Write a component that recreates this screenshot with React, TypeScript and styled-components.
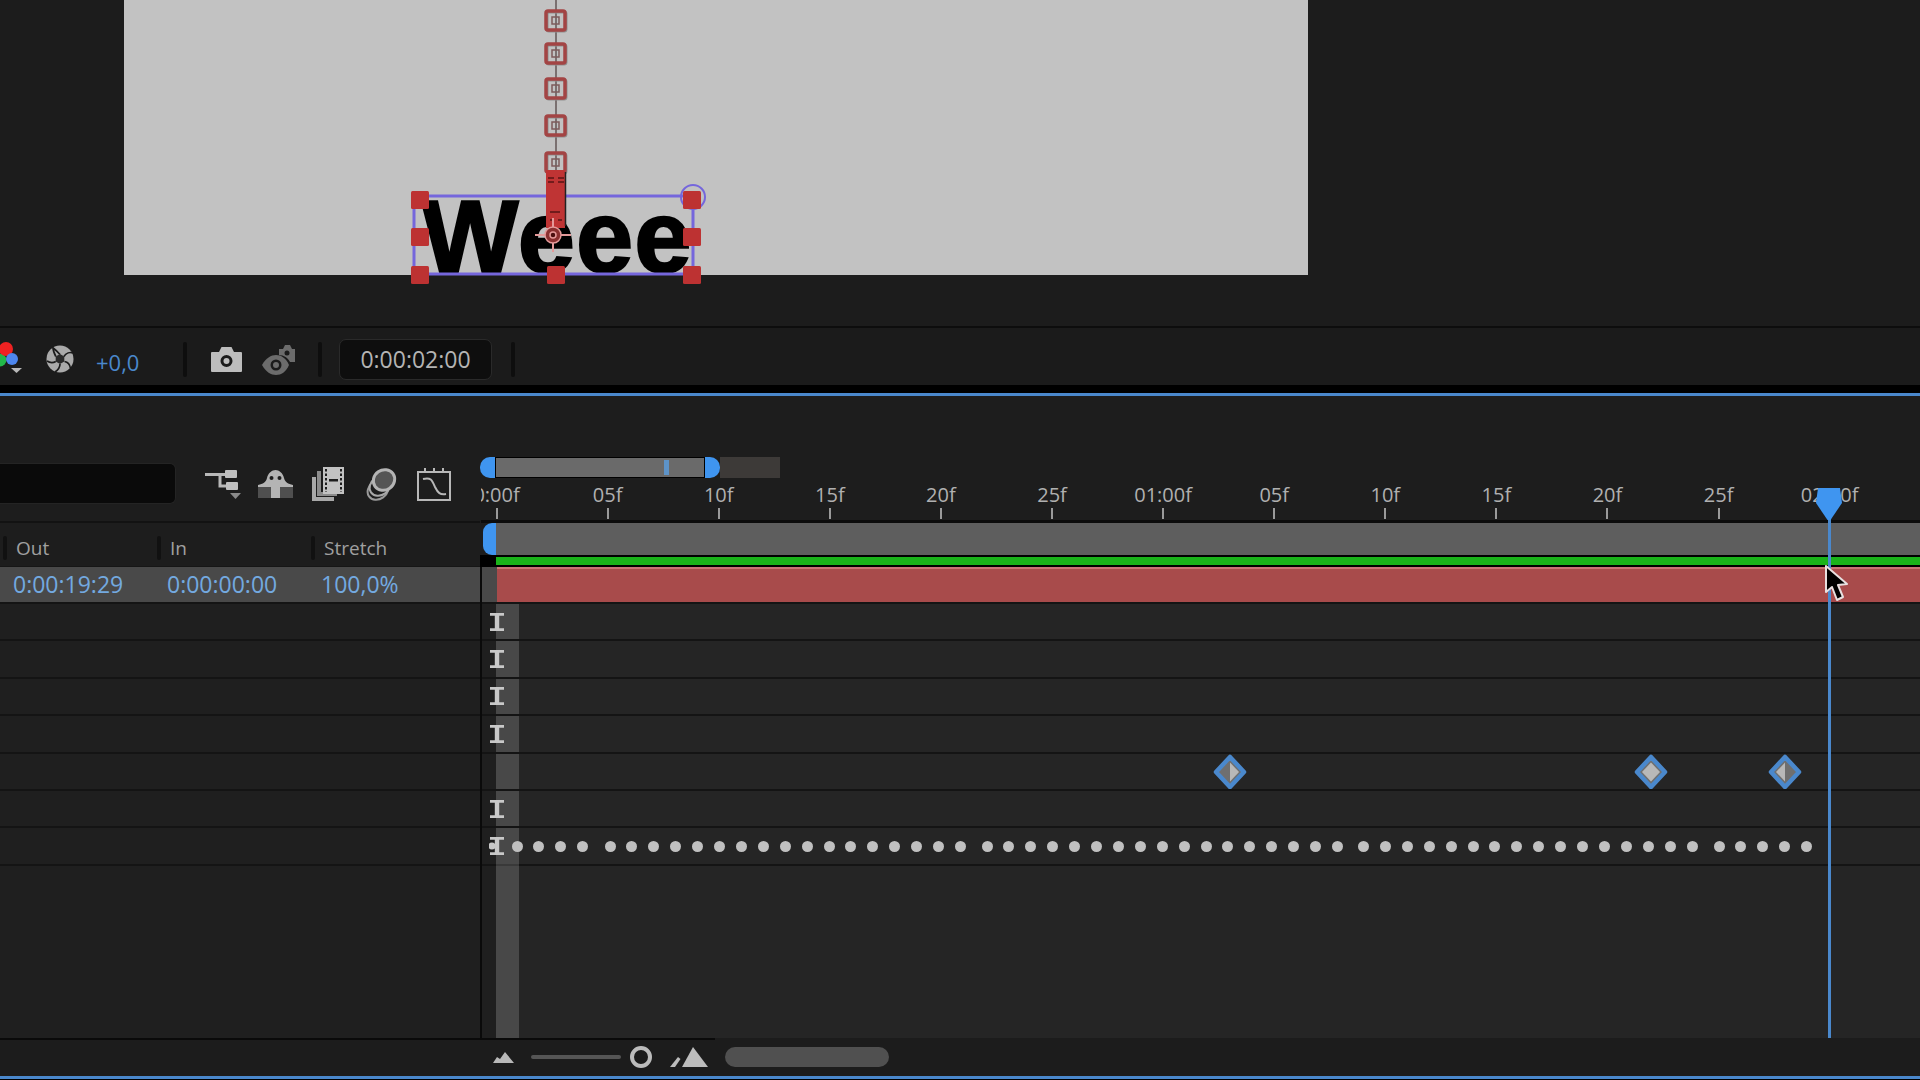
import React from "react";
import styled, { createGlobalStyle } from "styled-components";

const GlobalStyle = createGlobalStyle`
  html, body {
    margin: 0;
    background: #1c1c1c;
    overflow: hidden;
  }
  * {
    box-sizing: border-box;
  }
`;

const BLUE = "#4a88cc";

const Page = styled.div`
  width: 1920px;
  height: 1080px;
  display: flex;
  flex-direction: column;
  overflow: hidden;
  font-family: "Open Sans", "Liberation Sans", sans-serif;
  color: #a8a8a8;
`;

// Composition viewer
const Viewer = styled.div`
  height: 326px;
  flex: none;
  padding-left: 124px;
  background: #1c1c1c;
`;

const Canvas = styled.div`
  position: relative;
  width: 1184px;
  height: 275px;
  background: #c2c2c2;
`;

const CanvasText = styled.div`
  position: absolute;
  left: 298px;
  top: 186px;
  font-family: "Liberation Sans", Arial, sans-serif;
  font-weight: 700;
  font-size: 102px;
  letter-spacing: 1.5px;
  line-height: 1;
  color: #000;
  -webkit-text-stroke: 2.5px #000;
`;

const Overlay = styled.svg`
  position: absolute;
  left: 0;
  top: 0;
  overflow: visible;
`;

// Viewer toolbar
const Toolbar = styled.div`
  height: 67px;
  flex: none;
  display: flex;
  align-items: center;
  padding-top: 5px;
  background: #1b1b1b;
  border-top: 2px solid #0d0d0d;
  border-bottom: 8px solid #000;
`;

const BlueLine = styled.div`
  height: 3px;
  flex: none;
  background: ${BLUE};
`;

const EndLine = styled.div`
  height: 1px;
  flex: none;
  background: #000;
`;

const ToolIcon = styled.svg<{ $gap?: number }>`
  flex: none;
  margin-left: ${(p) => p.$gap ?? 0}px;
`;

const Exposure = styled.span`
  margin-left: 22px;
  width: 46px;
  font-size: 22px;
  line-height: 1;
  color: ${BLUE};
  padding-top: 6px;
  white-space: nowrap;
`;

const ToolSep = styled.div<{ $gap: number }>`
  flex: none;
  width: 4px;
  height: 35px;
  margin-left: ${(p) => p.$gap}px;
  background: #0e0e0e;
  border-radius: 2px;
`;

const Timecode = styled.div`
  margin-left: 17px;
  width: 153px;
  height: 41px;
  display: flex;
  align-items: center;
  justify-content: center;
  background: #0e0e0e;
  border: 1px solid #2a2a2a;
  border-radius: 7px;
  font-size: 23px;
  color: #b4b4b4;
`;

// Timeline panel
const Timeline = styled.div`
  flex: 1;
  display: grid;
  grid-template-columns: 480px 1fr;
  min-height: 0;
  background: #1d1d1d;
`;

const LeftPane = styled.div`
  display: flex;
  flex-direction: column;
  position: relative;
  z-index: 1;
  &::after {
    content: "";
    position: absolute;
    right: -2px;
    top: 171px;
    bottom: 0;
    width: 2px;
    background: #0a0a0a;
  }
`;

const SearchRow = styled.div`
  height: 127px;
  flex: none;
  display: flex;
  align-items: flex-start;
  padding-top: 67px;
  border-bottom: 2px solid #121212;
`;

const SearchBox = styled.div`
  width: 176px;
  height: 41px;
  background: #0a0a0a;
  border: 1px solid #242424;
  border-left: none;
  border-radius: 0 6px 6px 0;
  flex: none;
`;

const SwitchIcon = styled.svg<{ $gap: number }>`
  flex: none;
  margin-left: ${(p) => p.$gap}px;
  margin-top: 4px;
`;

const COLUMNS = "154px 154px 134px";

const HeaderRow = styled.div`
  height: 43px;
  flex: none;
  display: grid;
  grid-template-columns: ${COLUMNS};
  padding: 6px 0 0 3px;
  align-items: center;
  background: #1d1d1d;
`;

const HeaderCell = styled.div`
  display: flex;
  align-items: center;
  font-size: 19px;
  color: #a0a0a0;
  &::before {
    content: "";
    width: 4px;
    height: 24px;
    margin-right: 9px;
    background: #111;
    border-radius: 2px;
  }
`;

const SelectedRow = styled.div`
  height: 36px;
  flex: none;
  display: grid;
  grid-template-columns: ${COLUMNS};
  align-items: center;
  padding-left: 13px;
  background: #494949;
  border-top: 1px solid #161616;
`;

const ValueCell = styled.div`
  font-size: 23px;
  line-height: 1;
  color: #73a9e0;
  white-space: nowrap;
`;

const LeftRow = styled.div`
  height: 37.4px;
  flex: none;
  background: #1f1f1f;
  border-top: 2px solid #141414;
`;

const LeftRest = styled.div`
  flex: 1;
  background: #1f1f1f;
  border-top: 2px solid #141414;
`;

const RightPane = styled.div`
  position: relative;
  display: flex;
  flex-direction: column;
  min-width: 0;
`;

const NavArea = styled.div`
  height: 82px;
  flex: none;
  display: flex;
  align-items: flex-end;
`;

const NavHandle = styled.div<{ $side: "left" | "right" }>`
  width: 15px;
  height: 21px;
  flex: none;
  background: #3f95f0;
  border-radius: ${(p) => (p.$side === "left" ? "10px 0 0 10px" : "0 10px 10px 0")};
`;

const NavBar = styled.div`
  position: relative;
  width: 210px;
  height: 21px;
  flex: none;
  background: #6a6a6a;
  border: 1px solid #000;
`;

const NavMarker = styled.div`
  position: absolute;
  left: 168px;
  top: 2px;
  width: 5px;
  height: 15px;
  background: #5d93c8;
`;

const NavRest = styled.div`
  width: 60px;
  height: 21px;
  flex: none;
  background: #3d3a38;
`;

const Ruler = styled.div`
  height: 45px;
  flex: none;
  display: flex;
  margin-left: 1px;
  overflow: hidden;
  border-bottom: 3px solid #0c0c0c;
`;

const RulerCells = styled.div`
  display: flex;
  margin-left: -40px;
`;

const RulerCell = styled.div`
  width: 111.1px;
  flex: none;
  display: flex;
  flex-direction: column;
  align-items: center;
  font-size: 20px;
  line-height: 24px;
  padding-top: 5px;
  color: #b0b0b0;
  white-space: nowrap;
  &::after {
    content: "";
    width: 2px;
    height: 11px;
    margin-top: 1px;
    background: #9a9a9a;
  }
`;

const WorkArea = styled.div`
  height: 32px;
  flex: none;
  display: flex;
  padding-left: 3px;
`;

const WorkHandle = styled.div`
  width: 13px;
  flex: none;
  background: #3f95f0;
  border-radius: 9px 0 0 9px;
`;

const WorkBar = styled.div`
  flex: 1;
  background: #5e5e5e;
`;

const RenderTrack = styled.div`
  height: 12px;
  flex: none;
  padding: 2px 0 2px 16px;
  background: #000;
`;

const RenderBar = styled.div`
  height: 8px;
  background: #1ab31a;
`;

const LayerRow = styled.div`
  height: 35px;
  flex: none;
  padding-left: 17px;
  background: #494949;
`;

const LayerBar = styled.div`
  height: 100%;
  background: #a84b4b;
  border-top: 2px solid #c77474;
`;

const Tracks = styled.div`
  position: relative;
  flex: 1;
  display: flex;
  flex-direction: column;
  background: linear-gradient(to right, #1f1f1f 16px, #252525 16px);
`;

const TrackRow = styled.div`
  position: relative;
  height: 37.4px;
  flex: none;
  display: flex;
  align-items: center;
  padding-left: 9px;
  border-top: 2px solid #141414;
`;

const TrackRest = styled.div`
  flex: 1;
  border-top: 2px solid #141414;
`;

const StartColumn = styled.div`
  position: absolute;
  left: 16px;
  top: 0;
  bottom: 0;
  width: 23px;
  background: rgba(255, 255, 255, 0.16);
`;

const Dot = styled.div`
  position: absolute;
  top: 50%;
  width: 11px;
  height: 11px;
  margin: -5px 0 0 -5.5px;
  border-radius: 50%;
  background: #c0c0c0;
`;

const Keyframe = styled.svg`
  position: absolute;
  top: 50%;
  margin: -17px 0 0 -17px;
`;

const Playhead = styled.div`
  position: absolute;
  left: 1347.5px;
  top: 92px;
  bottom: 0;
  width: 3px;
  background: ${BLUE};
  z-index: 3;
`;

const PlayheadCap = styled.svg`
  position: absolute;
  left: 1336px;
  top: 92px;
  z-index: 4;
`;

const Pointer = styled.svg`
  position: absolute;
  left: 1344px;
  top: 168px;
  z-index: 5;
`;

// Bottom strip
const BottomBar = styled.div`
  height: 38px;
  flex: none;
  display: flex;
  align-items: center;
  padding-left: 493px;
  background: #1c1c1c;
  position: relative;
  &::before {
    content: "";
    position: absolute;
    left: 0;
    top: 0;
    width: 715px;
    height: 2px;
    background: #0a0a0a;
  }
`;

const ZoomSlider = styled.div`
  width: 90px;
  height: 4px;
  flex: none;
  margin-left: 17px;
  background: #555;
  border-radius: 2px;
`;

const ZoomKnob = styled.div`
  width: 22px;
  height: 22px;
  flex: none;
  margin-left: 9px;
  border: 4px solid #bcbcbc;
  border-radius: 50%;
`;

const BigMountain = styled.svg`
  flex: none;
  margin-left: 18px;
`;

const ScrollThumb = styled.div`
  width: 164px;
  height: 20px;
  flex: none;
  margin-left: 17px;
  background: #505050;
  border-radius: 10px;
`;

const RULER = [
  "0:00f", "05f", "10f", "15f", "20f", "25f", "01:00f",
  "05f", "10f", "15f", "20f", "25f", "02:00f",
];

const COLS = [
  { label: "Out", value: "0:00:19:29" },
  { label: "In", value: "0:00:00:00" },
  { label: "Stretch", value: "100,0%" },
];

// dot runs read off the reference: [first x, count], x relative to the timeline pane
const DOT_RUNS: [number, number][] = [
  [37, 4],
  [130, 17],
  [507, 17],
  [883.5, 16],
  [1239, 5],
];

const dots = DOT_RUNS.flatMap(([start, count]) =>
  Array.from({ length: count }, (_, i) => start + i * 21.9),
);

const TEXT_ROWS = [true, true, true, true, false, true, true];

const IBeam = ({ notched }: { notched?: boolean }) => (
  <svg width="16" height="20" viewBox="0 0 16 20">
    <path d="M1 1h14v2.800H10.200v12.400H15V19H1v-2.800h4.800V3.800H1z" fill="#c8c8c8" />
    {notched && <circle cx="3" cy="10" r="3.500" fill="#c8c8c8" />}
  </svg>
);

const KeyDiamond = ({ x, kind }: { x: number; kind: "in" | "mid" | "out" }) => (
  <Keyframe width="34" height="36" viewBox="0 0 34 36" style={{ left: x }}>
    <path
      d="M17 3 L31 18 L17 33 L3 18 Z"
      fill="#6f6f6f"
      stroke={BLUE}
      strokeWidth="4.500"
      strokeLinejoin="round"
    />
    {kind === "in" && <path d="M17 8.500 L26 18 L17 27.500 Z" fill="#b8b8b8" />}
    {kind === "out" && <path d="M17 8.500 L8 18 L17 27.500 Z" fill="#b8b8b8" />}
    {kind === "mid" && <path d="M17 8.500 L26 18 L17 27.500 L8 18 Z" fill="#b8b8b8" />}
  </Keyframe>
);

const HANDLE_POINTS = [
  [420, 200], [692, 200], [420, 237], [692, 237], [420, 275], [556, 275], [692, 275],
];
const PATH_SQUARES = [21, 54, 89, 126, 163];

const SelectionOverlay = () => (
  <Overlay width="1184" height="300" viewBox="124 0 1184 300">
    <line x1="556" y1="0" x2="556" y2="170" stroke="#7a7070" strokeWidth="2" />
    {PATH_SQUARES.map((y) => (
      <g key={y}>
        <rect x="547" y={y - 9} width="19" height="19" rx="2" fill="none" stroke="#8f8f8f" strokeWidth="3" />
        <rect x="546" y={y - 10} width="19" height="19" rx="2" fill="none" stroke="#a34444" strokeWidth="3.500" />
        <rect x="552" y={y - 4} width="7" height="7" fill="none" stroke="#7d5b5b" strokeWidth="1.500" />
      </g>
    ))}
    <rect x="414" y="196" width="279" height="78" fill="none" stroke="#7566dc" strokeWidth="3" />
    <circle cx="693" cy="197" r="12" fill="none" stroke="#7566dc" strokeWidth="2" />
    <rect x="546" y="170" width="19" height="58" fill="#bf3434" />
    <path d="M565.500 172v54" stroke="#222" strokeWidth="1.500" />
    <path d="M548 178h6M558 178h6M548 182h6M558 182h6M550 212h10M550 220h4M558 220h4" stroke="#5a1414" strokeWidth="1.500" />
    <g fill="none" stroke="#e49a9a" strokeWidth="1.500">
      <circle cx="553" cy="235" r="8" fill="#8a3030" />
      <circle cx="553" cy="235" r="3" fill="#4a1010" />
      <path d="M535 235h10M561 235h10M553 218v9M553 243v9" strokeWidth="2" />
    </g>
    {HANDLE_POINTS.map(([x, y]) => (
      <rect key={`${x}-${y}`} x={x - 9} y={y - 9} width="18" height="18" rx="1.500" fill="#bd3232" />
    ))}
  </Overlay>
);

const App = () => (
  <Page>
    <GlobalStyle />
    <Viewer>
      <Canvas>
        <CanvasText>Weee</CanvasText>
        <SelectionOverlay />
      </Canvas>
    </Viewer>

    <Toolbar>
      <ToolIcon width="24" height="40" viewBox="0 0 24 40">
        <circle cx="0" cy="21" r="6.500" fill="#22b84a" />
        <circle cx="6" cy="10" r="7" fill="#ee2222" />
        <circle cx="12" cy="20" r="6" fill="#4d86ee" />
        <path d="M11 29h11l-5.500 5z" fill="#b8b8b8" />
      </ToolIcon>
      <ToolIcon $gap={22} width="28" height="28" viewBox="0 0 28 28">
        <circle cx="14" cy="14" r="13.500" fill="#aaaaaa" />
        <g stroke="#1b1b1b" strokeWidth="1.700" fill="none">
          <path d="M14 9.500C11 6 8.500 4 6 2M18 11.500C20 8 24 7 27 8M18.500 16.500C22 17 24 20 24.500 23.500M14 19C14 22 12 25 9 27M9.800 16.500C7 18 4 18 1 16M9.800 11.500C8 8 7 6 7 2.500" />
        </g>
        <path d="M14 9 L18.300 11.500 V16.500 L14 19 L9.700 16.500 V11.500 Z" fill="#2a2a2a" />
      </ToolIcon>
      <Exposure>+0,0</Exposure>
      <ToolSep $gap={41} />
      <ToolIcon $gap={24} width="31" height="26" viewBox="0 0 31 26">
        <path
          fillRule="evenodd"
          d="M1 6h7l2.500-5h10l2.500 5h7a1 1 0 0 1 1 1v18a1 1 0 0 1-1 1H1a1 1 0 0 1-1-1V7a1 1 0 0 1 1-1z M15.500 9a6 6 0 1 0 0 12a6 6 0 0 0 0-12z"
          fill="#bdbdbd"
        />
        <circle cx="15.500" cy="15" r="3" fill="#bdbdbd" />
      </ToolIcon>
      <ToolIcon $gap={20} width="33" height="32" viewBox="0 0 33 32">
        <path d="M0 22c4-7 9-10 14-10s10 3 13 10c-3 7-8 10-13 10S4 29 0 22z" fill="#6c6c6c" />
        <circle cx="14" cy="22" r="5.500" fill="#1b1b1b" />
        <circle cx="14" cy="22" r="3" fill="#6c6c6c" />
        <path d="M17 6h4l2-4h5l2 4h3v13h-5c-2-4-6-7-11-7z" fill="#6c6c6c" />
        <circle cx="25" cy="10" r="2.500" fill="#1b1b1b" />
      </ToolIcon>
      <ToolSep $gap={23} />
      <Timecode>0:00:02:00</Timecode>
      <ToolSep $gap={19} />
    </Toolbar>
    <BlueLine />

    <Timeline>
      <LeftPane>
        <SearchRow>
          <SearchBox />
          <SwitchIcon $gap={29} width="38" height="34" viewBox="0 0 38 34">
            <path d="M0 7.500h22M15 7.500V19h7" fill="none" stroke="#b8b8b8" strokeWidth="3" />
            <rect x="20" y="3" width="12" height="8" rx="1" fill="#c0c0c0" />
            <rect x="21" y="15" width="12" height="8" rx="1" fill="#c0c0c0" />
            <path d="M25 26h11l-5.500 6z" fill="#8a8a8a" />
          </SwitchIcon>
          <SwitchIcon $gap={15} width="35" height="34" viewBox="0 0 35 34">
            <rect x="0" y="19" width="35" height="12" fill="#4f4f4f" />
            <path d="M0 18c5-1 8-3 9-7 1-5 5-8 8.500-8S25 6 26 11c1 4 4 6 9 7v2H22v11h-9V20H0z" fill="#b4b4b4" />
            <circle cx="13.500" cy="11" r="2" fill="#1d1d1d" />
            <circle cx="21.500" cy="11" r="2" fill="#1d1d1d" />
          </SwitchIcon>
          <SwitchIcon $gap={19} width="32" height="34" viewBox="0 0 32 34">
            <path d="M0 10h4v20h18v4H0z" fill="#a8a8a8" />
            <path d="M5 4h4v21h16v4H5z" fill="#8c8c8c" />
            <rect x="11" y="0" width="21" height="27" fill="#c2c2c2" />
            <path d="M14 2v23M29 2v23" stroke="#1d1d1d" strokeWidth="2" strokeDasharray="2.500 2" />
            <rect x="17" y="12" width="9" height="2.500" fill="#1d1d1d" />
          </SwitchIcon>
          <SwitchIcon $gap={21} width="32" height="34" viewBox="0 0 32 34" fill="none">
            <ellipse cx="13" cy="23" rx="11" ry="9" transform="rotate(-35 13 23)" stroke="#9a9a9a" strokeWidth="2" />
            <ellipse cx="15" cy="19" rx="11" ry="9" transform="rotate(-35 15 19)" stroke="#a8a8a8" strokeWidth="2" fill="#1d1d1d" />
            <ellipse cx="19" cy="13" rx="11" ry="10" transform="rotate(-35 19 13)" stroke="#b4b4b4" strokeWidth="3" fill="#555" />
          </SwitchIcon>
          <SwitchIcon $gap={20} width="34" height="34" viewBox="0 0 34 34" fill="none" stroke="#b8b8b8" strokeWidth="2">
            <rect x="1" y="5" width="32" height="28" />
            <path d="M8 1v4M17 1v4M26 1v4" />
            <path d="M6 12c8-2 9 1 12 8 3 6 5 8 11 7" />
          </SwitchIcon>
        </SearchRow>
        <HeaderRow>
          {COLS.map((col) => (
            <HeaderCell key={col.label}>{col.label}</HeaderCell>
          ))}
        </HeaderRow>
        <SelectedRow>
          {COLS.map((col) => (
            <ValueCell key={col.label}>{col.value}</ValueCell>
          ))}
        </SelectedRow>
        {TEXT_ROWS.map((_, i) => (
          <LeftRow key={i} />
        ))}
        <LeftRest />
      </LeftPane>

      <RightPane>
        <NavArea>
          <NavHandle $side="left" />
          <NavBar>
            <NavMarker />
          </NavBar>
          <NavHandle $side="right" />
          <NavRest />
        </NavArea>
        <Ruler>
          <RulerCells>
            {RULER.map((label, i) => (
              <RulerCell key={i}>{label}</RulerCell>
            ))}
          </RulerCells>
        </Ruler>
        <WorkArea>
          <WorkHandle />
          <WorkBar />
        </WorkArea>
        <RenderTrack>
          <RenderBar />
        </RenderTrack>
        <LayerRow>
          <LayerBar />
        </LayerRow>
        <Tracks>
          <StartColumn />
          {TEXT_ROWS.map((hasText, i) => (
            <TrackRow key={i}>
              {hasText && <IBeam notched={i === 6} />}
              {i === 4 && (
                <>
                  <KeyDiamond x={750} kind="in" />
                  <KeyDiamond x={1171} kind="mid" />
                  <KeyDiamond x={1305} kind="out" />
                </>
              )}
              {i === 6 &&
                dots.map((x) => <Dot key={x} style={{ left: x }} />)}
            </TrackRow>
          ))}
          <TrackRest />
        </Tracks>
        <Playhead />
        <PlayheadCap width="26" height="32" viewBox="0 0 26 32">
          <path d="M2 0h22l2 15L14.500 32h-3L0 15z" fill="#3f95f0" />
        </PlayheadCap>
        <Pointer width="28" height="40" viewBox="0 0 28 40">
          <path
            d="M2 2 L2 28 L8 23 L13 36 L19 33 L14 21 L23 20 Z"
            fill="#000"
            stroke="#e8e0e0"
            strokeWidth="2"
            strokeLinejoin="round"
          />
        </Pointer>
      </RightPane>
    </Timeline>

    <BottomBar>
      <svg width="21" height="12" viewBox="0 0 21 12" fill="#b8b8b8">
        <path d="M0 12 4 6l3 2 5-7 9 11z" />
      </svg>
      <ZoomSlider />
      <ZoomKnob />
      <BigMountain width="38" height="20" viewBox="0 0 38 20" fill="#bcbcbc">
        <path d="M12 20 23 0l15 20z" />
        <path d="M0 20 8 10l2.500 2L5 20z" />
      </BigMountain>
      <ScrollThumb />
    </BottomBar>
    <BlueLine />
    <EndLine />
  </Page>
);

export default App;
